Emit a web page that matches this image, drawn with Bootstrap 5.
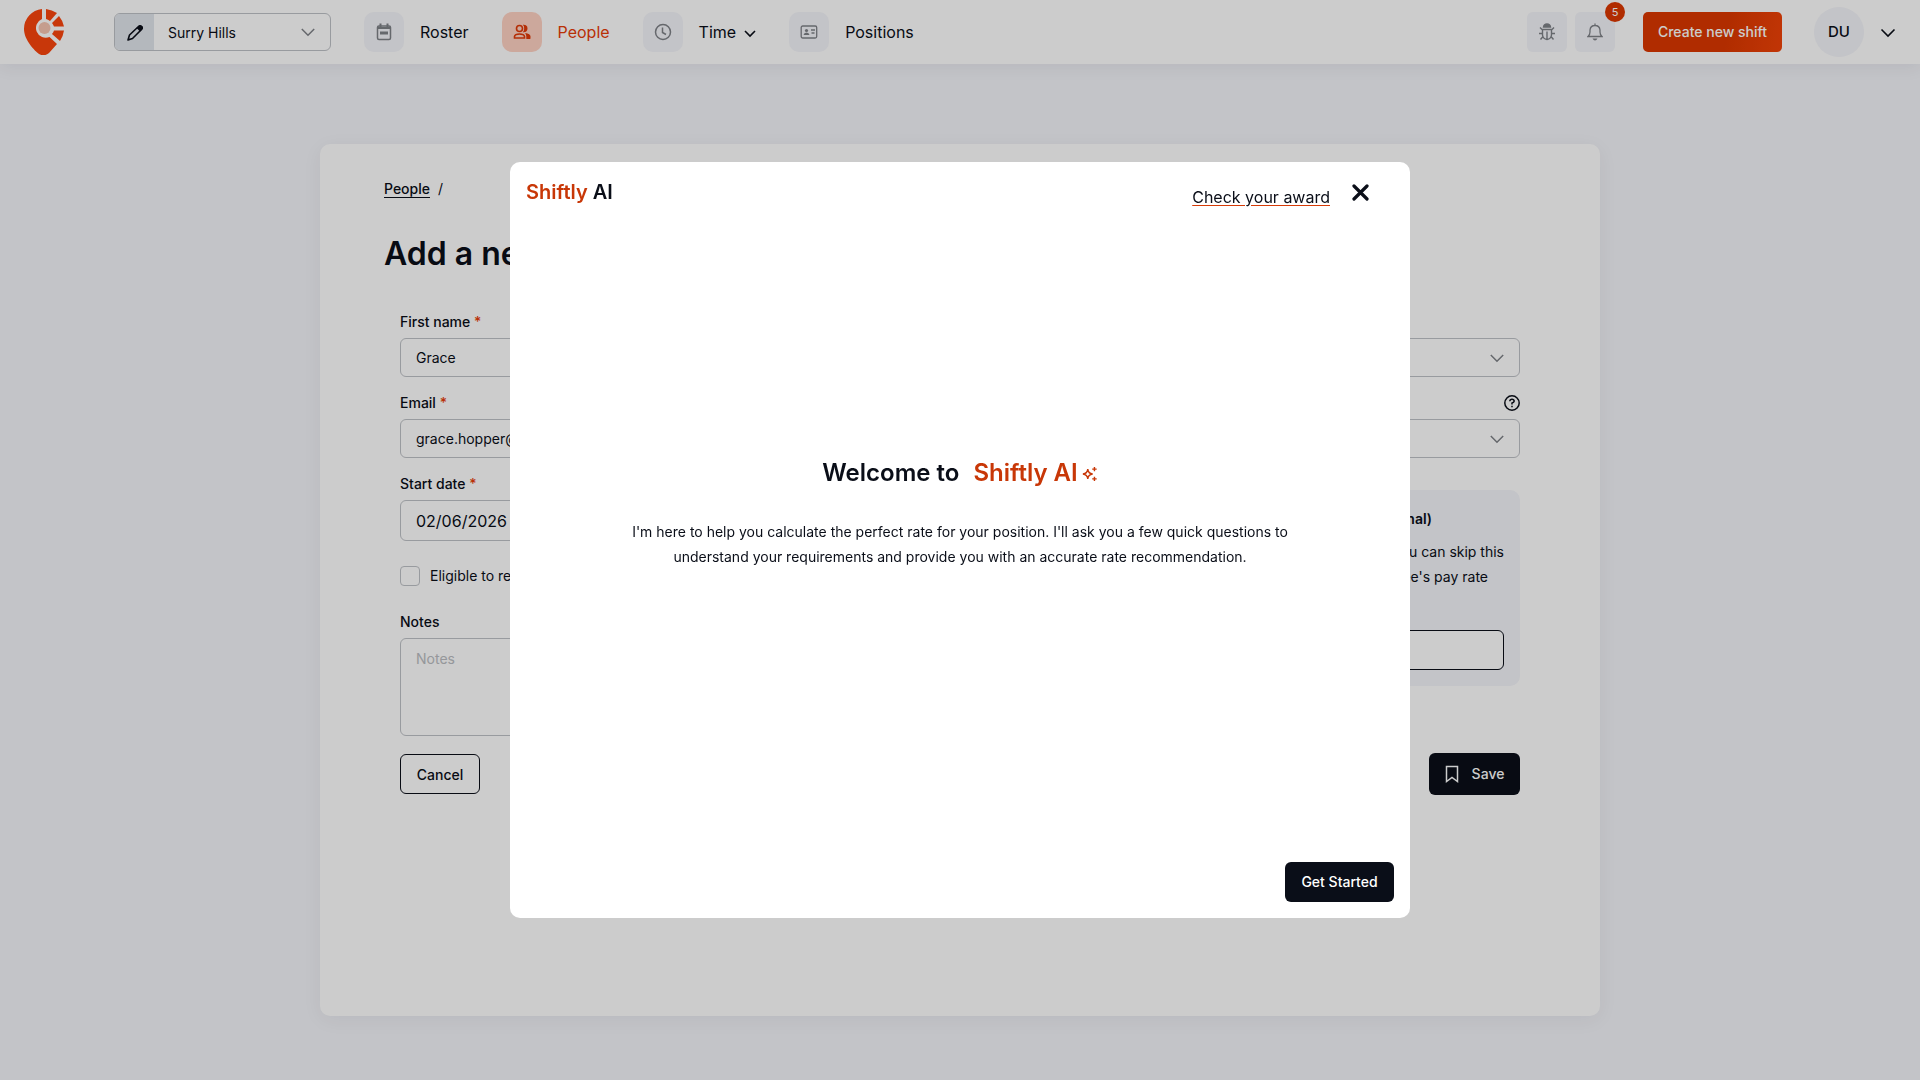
<!DOCTYPE html>
<html lang="en">
<head>
<meta charset="utf-8">
<meta name="viewport" content="width=device-width, initial-scale=1">
<title>Add a new employee</title>
<link href="https://cdn.jsdelivr.net/npm/bootstrap@5.3.0/dist/css/bootstrap.min.css" rel="stylesheet">
<style>
:root{--ink:#0a0e18;--brand:#c83707;--line:#bfc2c7;--tile:#f4f5fa;--grey:#7f8288}
body{font-family:Inter,"Open Sans",sans-serif;font-size:14px;line-height:20px;color:var(--ink);background:var(--tile)}
.topbar{height:64px;background:#fff;box-shadow:0 4px 16px rgba(10,14,40,.06);padding:0 24px}
.site-picker{width:217px;height:38px;margin-left:50px;border:1px solid var(--line);border-radius:6px;overflow:hidden}
.site-edit{width:39px;flex:none;border:0;background:#e2e6ed;color:var(--ink);padding:0}
.form-select{--bs-form-select-bg-img:url("data:image/svg+xml,%3Csvg xmlns='http://www.w3.org/2000/svg' viewBox='0 0 14 14'%3E%3Cpath d='M.8 4 7 10.200 13.200 4' fill='none' stroke='%237f8288' stroke-width='1.500'/%3E%3C/svg%3E");background-size:14px 14px}
.site-picker .form-select{border:0;font-size:14px;padding:0 32px 0 14px;background-color:transparent;background-position:right 15px center;color:var(--ink)}
.main-nav{margin-left:33px;gap:33px}
.main-nav a{display:flex;align-items:center;gap:16px;font-size:16px;color:var(--ink);text-decoration:none}
.main-nav a.current{color:#e83c08}
.tile{width:40px;height:40px;border:0;padding:0;border-radius:10px;background:var(--tile);color:var(--grey);display:flex;align-items:center;justify-content:center;flex:none}
.tile.small-round{border-radius:6px}
.current .tile{background:#ffd3c4;color:#e23a08}
.count{position:absolute;top:-10px;right:-10px;width:20px;height:20px;border-radius:50%;background:#dd3800;color:#fff;font-size:11px;line-height:20px}
.btn-create{height:40px;width:139px;margin-left:28px;border:0;border-radius:5px;background:linear-gradient(100deg,#dd3800 60%,#f24308);color:#fff;font-weight:500;font-size:14px;white-space:nowrap;padding:0}
.avatar{width:50px;height:50px;margin-left:32px;border-radius:50%;background:var(--tile);font-size:15px;font-weight:500}
.sheet{max-width:1280px;min-height:872px;margin:80px auto 64px;padding:35px 64px;background:#fff;border-radius:10px;box-shadow:0 4px 20px rgba(10,14,40,.05)}
.crumbs a{color:var(--ink);font-weight:500;text-underline-offset:3px}
.sheet h1{font-size:32px;line-height:40px;font-weight:600;margin:35px 0 38px}
.entry{padding:0 16px}
.entry .form-label{margin:0 0 6px;font-weight:500;line-height:20px;display:block}
.need{color:#e83c08}
.entry .form-control,.entry .form-select{font-size:14px;border-color:var(--line);border-radius:6px;height:39px;color:var(--ink);padding-left:15px;background-color:#fff}
.entry .form-select{background-position:right 15px center}
.entry .date-box{font-size:16px;height:41px}
.entry .note-box{height:98px;padding-top:9px;resize:none}
.note-box::placeholder{color:#bbbdc2}
.tick-line{gap:10px;margin:25px 0 26px}
.entry .form-check-input{width:20px;height:20px;margin:0;border-color:var(--line);border-radius:4px}
.rate{background:var(--tile);border-radius:10px;padding:16px;margin-top:32px;height:196px}
.rate h2{font-size:14px;line-height:26px;font-weight:600;margin:0 0 7px;padding-right:72px}
.rate p{line-height:25px;margin:0 0 41px}
.entry .rate-box{border-color:var(--ink);height:40px}
.actions{margin-top:17px}
.btn-dark-fill{background:#0a0e18;color:#fff;border:0;border-radius:6px;font-size:14px;font-weight:500}
.btn-save{width:91px;height:42px;padding:0;gap:13px}
.btn-get{width:109px;height:40px;padding:0}
.btn-outline-ink{border:1px solid var(--ink);border-radius:6px;width:80px;height:40px;font-size:14px;font-weight:500;padding:0;color:var(--ink)}
.modal-backdrop{--bs-backdrop-opacity:.2}
.assist{max-width:900px;min-height:100vh;margin:0 auto}
.assist .modal-content{height:70vh;border:0;border-radius:10px;color:var(--ink)}
.assist .modal-header{padding:16px 41px 0 16px;border:0;align-items:flex-start}
.assist .modal-title{font-size:20px;line-height:28px;font-weight:600}
.accent{color:var(--brand)}
.award{font-size:16px;line-height:24px;color:var(--ink);text-decoration-color:#d63a06;text-underline-offset:2px;margin-top:7px}
.shut{border:0;background:none;padding:0;margin:6px 0 0 22px;width:17px;line-height:0}
.assist h3{font-size:24px;line-height:38px;font-weight:600;margin-bottom:27px}
.assist .modal-body p{max-width:656px;line-height:25px;margin:0}
.assist .modal-body{padding-bottom:48px}
</style>
</head>
<body>
<header class="topbar d-flex align-items-center">
  <a href="#" aria-label="Home"><svg class="d-block" width="40" height="46" viewBox="0 0 40 46"><path d="M18 0A20 20 0 0 0 0 20C0 31 11 42 15 45Q20 48 25 44L33 35 25.500 28A9.500 9.500 0 1 1 18 10Z" fill="#fa450d"/><path d="M22 0Q28 1 33 4L26 12Q24 10.500 22 10ZM35 7Q39 12 40 17.500H30Q29 15 28 14ZM40 21.500Q39 28 36 32L28 25Q29.500 23 30 21.500Z" fill="#fa450d"/><circle cx="20.500" cy="19" r="6" fill="#f7c5b2"/></svg></a>
  <div class="site-picker d-flex">
    <button class="site-edit" aria-label="Edit site"><svg width="18" height="18" viewBox="0 0 18 18"><path d="M2 16 3.500 11 12.500 2.500Q14 1 15.500 2.500T15.500 5.500L6.500 14.500Z" fill="none" stroke="currentColor" stroke-width="1.600" stroke-linejoin="round"/><path d="m10.500 4 2-2Q14 .5 16 2T16 5.500L14 7.500Z" fill="currentColor"/></svg></button>
    <select class="form-select" aria-label="Site"><option>Surry Hills</option></select>
  </div>
  <nav class="main-nav d-flex">
    <a href="#"><span class="tile"><svg width="16" height="18" viewBox="0 0 16 18" fill="none" stroke="currentColor" stroke-width="1.500"><rect x="1.500" y="3" width="13" height="13.500" rx="1.500"/><path d="M2 5h12M4.500.5v4M11.500.5v4" stroke-width="2"/><path d="M4 10h8" stroke-width="3"/></svg></span>Roster</a>
    <a href="#" class="current"><span class="tile"><svg width="18" height="16" viewBox="0 0 18 16" fill="none" stroke="currentColor" stroke-width="1.600"><circle cx="6.500" cy="4.500" r="3"/><path d="M1.500 14v-1.500Q2 10 6.500 10T11.500 12.500V14Z"/><path d="M10.500.8A3.800 3.800 0 0 1 10.500 8.200Q12.500 4.500 10.500.8ZM12.500 9.500Q17 10 17 13v2H13.500V12Z" fill="currentColor" stroke="none"/><path d="M10 .8Q14.500.6 14.500 4.500T10 8.200Q12.600 4.500 10 .8ZM12 9.200Q17.500 9.600 17.500 12.500V14.800H13.500V12Q13.400 10.400 12 9.200Z" fill="currentColor" stroke="none"/></svg></span>People</a>
    <a href="#"><span class="tile"><svg width="18" height="18" viewBox="0 0 18 18" fill="none" stroke="currentColor" stroke-width="1.500"><circle cx="9" cy="9" r="7.500"/><path d="M8.500 4.500V9.500L12 11.500"/></svg></span><span>Time<svg class="ms-2" width="12" height="8" viewBox="0 0 12 8" fill="none" stroke="currentColor" stroke-width="1.600"><path d="m1 1 5 5 5-5"/></svg></span></a>
    <a href="#"><span class="tile"><svg width="18" height="14" viewBox="0 0 18 14" fill="none" stroke="currentColor" stroke-width="1.300"><rect x="1.200" y="1" width="15.500" height="12" rx="1.500"/><circle cx="6.500" cy="5.500" r="1.600" fill="currentColor" stroke="none"/><path d="M3.500 10Q4 7.500 6.500 7.500T9.500 10Z" fill="currentColor" stroke="none"/><path d="M11 5h4M11.500 8h3"/></svg></span>Positions</a>
  </nav>
  <div class="d-flex align-items-center ms-auto">
    <button class="tile small-round" aria-label="Report a bug"><svg width="18" height="18" viewBox="0 0 18 18" fill="none" stroke="currentColor" stroke-width="1.400"><path d="M5.500 4Q6 1 9 1t3.500 3Z" fill="currentColor"/><path d="M4.500 6.500h9V12Q13 16 9 16.500 5 16 4.500 12ZM9 8.500V16M4.500 7 2 4.500M13.500 7 16 4.500M1 10.500h3.500M13.500 10.500H17M5 13.500 2.500 16.500M13 13.500 15.500 16.500"/></svg></button>
    <button class="tile small-round position-relative ms-2" aria-label="Notifications"><svg width="16" height="18" viewBox="0 0 16 18" fill="none" stroke="currentColor" stroke-width="1.300"><path d="M1 13.500H15Q13 12 13 9V7Q12.500 2.500 8 2.500T3 7V9Q3 12 1 13.500ZM8 2.500V.5"/><path d="M5.500 15.500h5Q9.500 17.500 8 17.500T5.500 15.500Z" fill="currentColor" stroke="none"/></svg><span class="count">5</span></button>
    <button class="btn-create">Create new shift</button>
    <span class="avatar d-flex align-items-center justify-content-center">DU</span>
    <button class="border-0 bg-transparent p-0 ms-3" aria-label="Account menu"><svg width="16" height="10" viewBox="0 0 16 10" fill="none" stroke="#0a0e18" stroke-width="1.600"><path d="m1.500 1.500 6.500 6.500 6.500-6.500"/></svg></button>
  </div>
</header>

<main class="sheet">
  <div class="crumbs"><a href="#">People</a><span class="ms-2">/</span></div>
  <h1>Add a new employee</h1>
  <form class="entry">
    <div class="row">
      <div class="col-6">
        <div class="mb-3"><label class="form-label" for="fn">First name <span class="need">*</span></label><input class="form-control" id="fn" value="Grace"></div>
        <div class="mb-3"><label class="form-label" for="em">Email <span class="need">*</span></label><input class="form-control" id="em" value="grace.hopper@example.com"></div>
        <div><label class="form-label" for="sd">Start date <span class="need">*</span></label><input class="form-control date-box" id="sd" value="02/06/2026"></div>
        <div class="tick-line d-flex align-items-center"><input class="form-check-input" type="checkbox" id="el"><label for="el">Eligible to receive overtime</label></div>
        <div><label class="form-label" for="nt">Notes</label><textarea class="form-control note-box" id="nt" placeholder="Notes"></textarea></div>
      </div>
      <div class="col-6">
        <div class="mb-3"><label class="form-label" for="ps">Position</label><select class="form-select" id="ps"><option></option></select></div>
        <div><div class="d-flex justify-content-between"><label class="form-label" for="ty">Employment type</label><svg width="16" height="20" viewBox="0 0 16 20" fill="none" stroke="#0a0e18" stroke-width="1.500"><circle cx="8" cy="10" r="7.200"/><path d="M5.800 8.300Q6 6.300 8 6.300T10.200 8.200Q10 9.500 8 10V11.500M8 12.800v1.400"/></svg></div><select class="form-select" id="ty"><option></option></select></div>
        <div class="rate">
          <h2 class="text-end">Pay rate (optional)</h2>
          <p class="text-end">You can skip this<br><span class="pe-3">employee's pay rate</span></p>
          <input class="form-control rate-box" aria-label="Pay rate">
        </div>
      </div>
    </div>
    <div class="actions d-flex justify-content-between align-items-center">
      <button type="button" class="btn btn-outline-ink">Cancel</button>
      <button type="button" class="btn-dark-fill btn-save d-flex align-items-center justify-content-center"><svg width="14" height="18" viewBox="0 0 14 18" fill="none" stroke="#fff" stroke-width="1.500"><path d="M1.500 1.500h11v15L7 12.500 1.500 16.500Z"/></svg>Save</button>
    </div>
  </form>
</main>

<div class="modal-backdrop show"></div>
<div class="modal show d-block" tabindex="-1" role="dialog" aria-labelledby="assistTitle">
  <div class="modal-dialog modal-dialog-centered assist">
    <div class="modal-content">
      <div class="modal-header">
        <h2 class="modal-title me-auto" id="assistTitle"><span class="accent">Shiftly</span> AI</h2>
        <a class="award" href="#">Check your award</a>
        <button class="shut" aria-label="Close"><svg width="17" height="17" viewBox="0 0 17 17"><path d="m2 2 13 13M15 2 2 15" stroke="#0a0e18" stroke-width="3.200" stroke-linecap="round"/></svg></button>
      </div>
      <div class="modal-body d-flex flex-column align-items-center justify-content-center text-center">
        <h3>Welcome to <span class="accent ms-2">Shiftly AI<svg class="ms-1" width="16" height="16" viewBox="0 0 18 18" fill="none" stroke="currentColor" stroke-width="1.600"><path d="M6.500 3.500Q7 8.500 12 9 7 9.500 6.500 14.500 6 9.500 1 9 6 8.500 6.500 3.500Z"/><path d="M14 1v5M11.500 3.500h5M14 12v5M11.500 14.500h5"/></svg></span></h3>
        <p>I'm here to help you calculate the perfect rate for your position. I'll ask you a few quick questions to understand your requirements and provide you with an accurate rate recommendation.</p>
      </div>
      <div class="modal-footer border-0 p-3"><button class="btn-dark-fill btn-get m-0">Get Started</button></div>
    </div>
  </div>
</div>
<script src="https://cdn.jsdelivr.net/npm/bootstrap@5.3.0/dist/js/bootstrap.bundle.min.js"></script>
</body>
</html>
